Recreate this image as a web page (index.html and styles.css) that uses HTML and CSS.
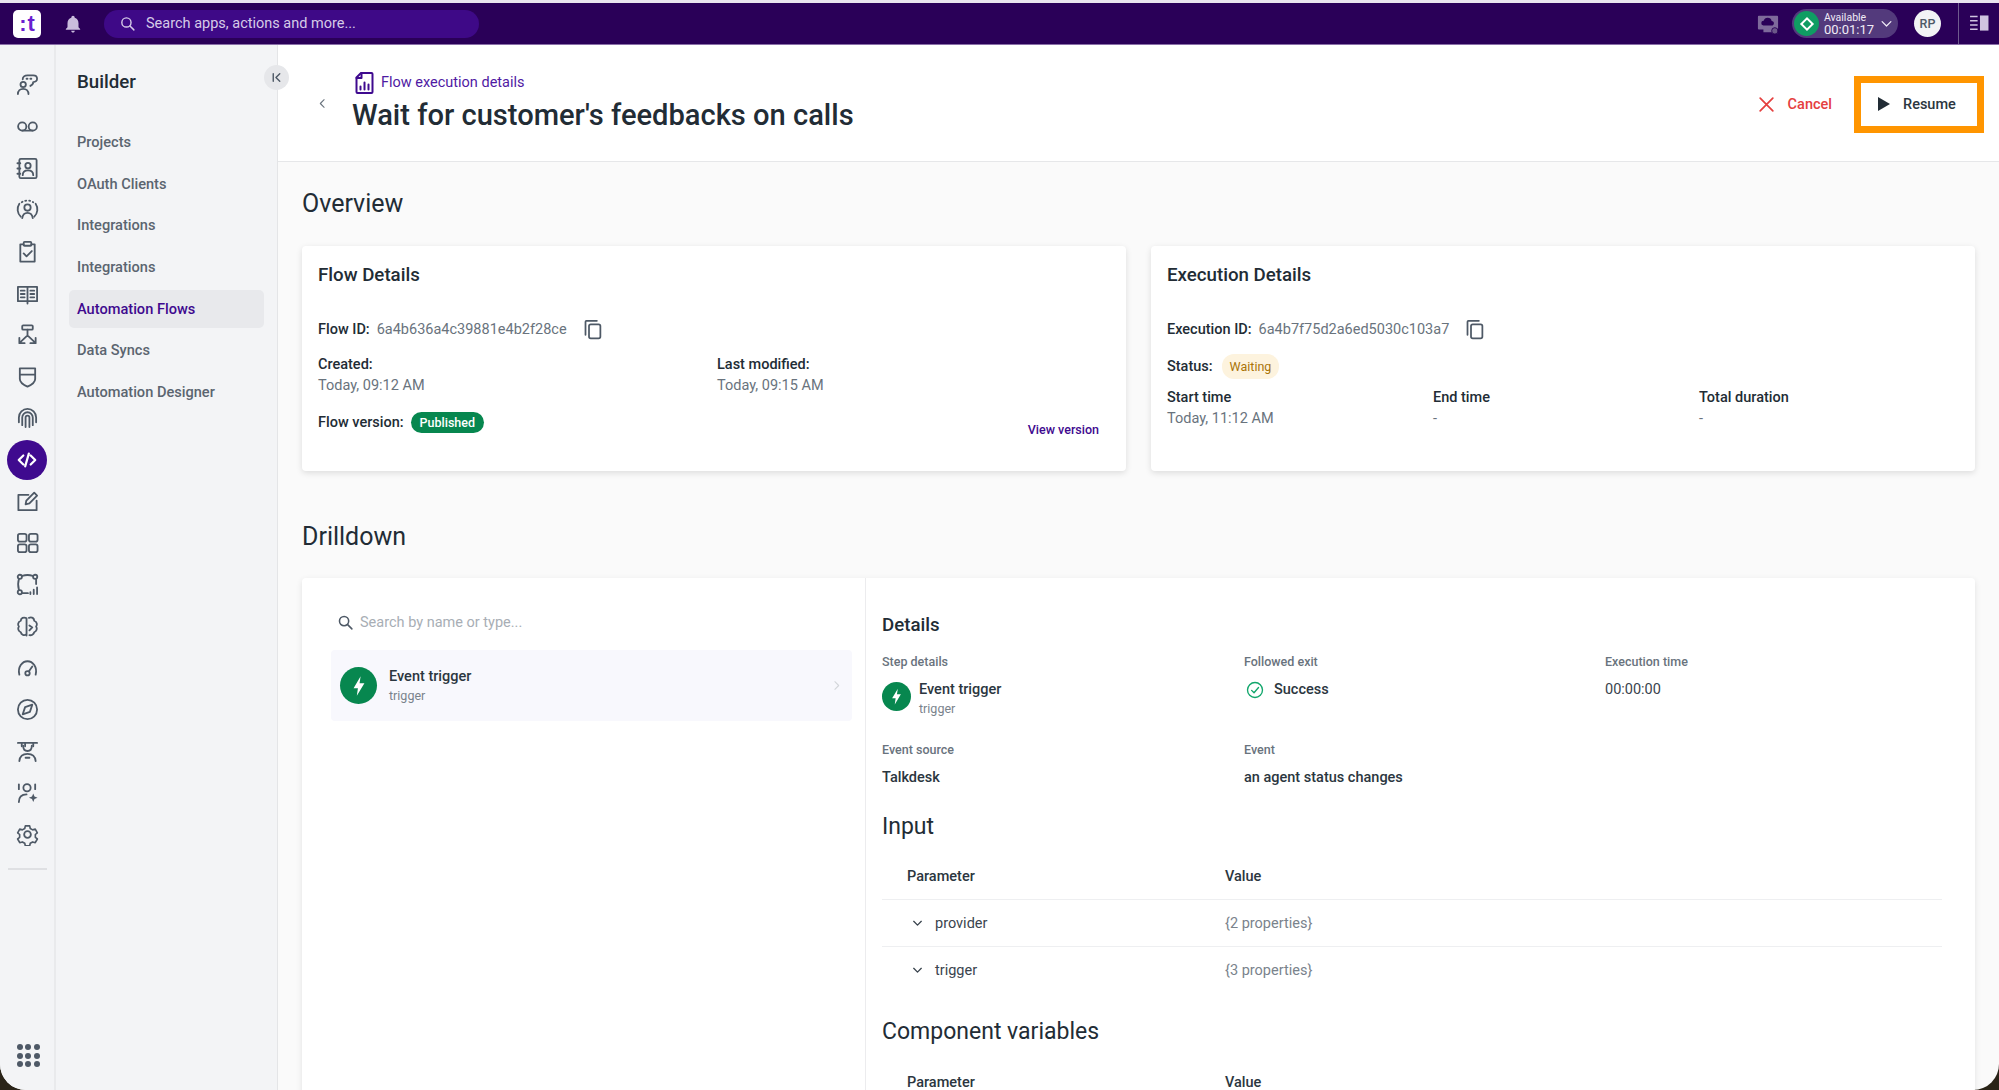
FILE: index.html
```html
<!DOCTYPE html>
<html lang="en">
<head>
<meta charset="UTF-8" />
<meta name="viewport" content="width=device-width, initial-scale=1" />
<title>Flow execution details</title>
<link rel="stylesheet" href="styles.css">
</head>
<body>
<div class="app">

  <!-- Top bar -->
  <header class="topbar">
    <div class="logo"><span class="logo-dots">:</span>t</div>
    <svg class="bell" viewBox="0 0 24 24"><path d="M12 2a2 2 0 0 1 2 2v.6c3 .9 4.6 3.4 4.6 6.6v4.6l2 2.2v1H3.400v-1l2-2.200v-4.600c0-3.200 1.600-5.700 4.600-6.600V4a2 2 0 0 1 2-2zM9.800 20.200h4.400a2.200 2.200 0 0 1-4.400 0z"/></svg>
    <div class="search-pill">
      <svg viewBox="0 0 24 24"><circle cx="10.500" cy="10.500" r="6.500"/><path d="M15.500 15.500L21 21"/></svg>
      <span>Search apps, actions and more...</span>
    </div>
    <div class="topbar-right">
      <svg class="monitor" viewBox="0 0 24 24"><path class="fill" d="M2 3h20a1 1 0 0 1 1 1v13a1 1 0 0 1-1 1h-5v3H7v-3H2a1 1 0 0 1-1-1V4a1 1 0 0 1 1-1z"/><path class="cloud" d="M7 13.500a2.500 2.500 0 0 1 .3-5 4.500 4.500 0 0 1 8.700.2 2.500 2.500 0 0 1 1 4.800z"/><circle class="dot-status" cx="19.500" cy="19.500" r="3.500"/></svg>
      <div class="status-pill">
        <div class="status-dot"><i></i></div>
        <div class="status-text"><span>Available</span><b>00:01:17</b></div>
        <svg viewBox="0 0 24 24"><path d="M5 9l7 7 7-7"/></svg>
      </div>
      <div class="avatar">RP</div>
      <div class="panel-toggle">
        <svg viewBox="0 0 20 18"><path d="M0 1.500h8M0 6h8M0 10.500h8M0 15h8" class="lines"/><rect x="10.500" y="0.500" width="9" height="16"/></svg>
      </div>
    </div>
  </header>

  <div class="body-row">

    <!-- Icon rail -->
    <nav class="rail">
      <a class="rail-item"><svg viewBox="0 0 24 24"><circle cx="7.500" cy="12" r="2.800"/><path d="M2 22c0-3.500 2.500-5.500 5.500-5.500s5.500 2 5.500 5.500"/><path d="M7 6.500C7 4 9 2.500 12 2.500h6c2.500 0 4 1.400 4 3.500s-1.500 3.500-4 3.500c0 1.500-1 3-3 4"/><path class="dotted" d="M11 6h7"/></svg></a>
      <a class="rail-item"><svg viewBox="0 0 24 24"><circle cx="6.500" cy="12" r="4.300"/><circle cx="17.500" cy="12" r="4.300"/><path d="M6.500 16.300h11"/></svg></a>
      <a class="rail-item"><svg viewBox="0 0 24 24"><rect x="3.500" y="2" width="18" height="20" rx="1.500"/><circle cx="12.500" cy="9" r="2.800"/><path d="M7 19c0-3.500 2.500-5 5.500-5s5.500 1.500 5.500 5M1.500 6.500h3M1.500 12h3M1.500 17.500h3"/></svg></a>
      <a class="rail-item"><svg viewBox="0 0 24 24"><circle cx="12" cy="10" r="3.300"/><path d="M6.500 21c.5-3.500 2.500-5.500 5.500-5.500s5 2 5.500 5.500"/><path d="M5 19.500A10.500 10.500 0 0 1 3.500 6M19 19.500A10.500 10.500 0 0 0 20.500 6"/><path class="dotted" d="M6 4.500a10.500 10.500 0 0 1 12 0"/></svg></a>
      <a class="rail-item"><svg viewBox="0 0 24 24"><path d="M8 4.500H4.500v18h15v-18H16"/><rect x="8" y="2" width="8" height="4" rx="1"/><path d="M8 14l3 3 5.500-5.500"/></svg></a>
      <a class="rail-item"><svg viewBox="0 0 24 24"><path d="M12 5H2v15h10V5zm0 0h10v15H12M12 20v2.500M5 9h4M5 12.500h4M5 16h4M15 9h4M15 12.500h4M15 16h4"/></svg></a>
      <a class="rail-item"><svg viewBox="0 0 24 24"><rect x="6.500" y="2.500" width="11" height="4.500" rx="1"/><path d="M12 7v6l-8 7.500M12 13l8 7.500M3.500 15.500v5.500H9M20.500 15.500v5.500H15"/></svg></a>
      <a class="rail-item"><svg viewBox="0 0 24 24"><path d="M4 3.500h16v11c0 3.500-3.500 6-8 8-4.500-2-8-4.500-8-8zM4 10h16"/></svg></a>
      <a class="rail-item"><svg viewBox="0 0 24 24"><path d="M3 17v-5a9 9 0 0 1 18 0v5M6.500 20v-8a5.500 5.500 0 0 1 11 0v8M10 22v-10a2 2 0 0 1 4 0v10M8 4l0 0"/></svg></a>
      <a class="rail-item"><span class="rail-active"><svg viewBox="0 0 24 24"><path d="M8 7l-5 5 5 5M16 7l5 5-5 5M14 5l-4 14"/></svg></span></a>
      <a class="rail-item"><svg viewBox="0 0 24 24"><path d="M13 5H2.500v16h19V11"/><path d="M10 15l.8-4L19 2.800l3 3L14 14z"/></svg></a>
      <a class="rail-item"><svg viewBox="0 0 24 24"><rect x="2" y="3" width="9" height="8" rx="2"/><rect x="13.500" y="3" width="9" height="8" rx="2"/><rect x="2" y="14" width="9" height="8" rx="2"/><rect x="13.500" y="14" width="9" height="8" rx="2"/></svg></a>
      <a class="rail-item"><svg viewBox="0 0 24 24"><circle cx="4" cy="4" r="2.200"/><circle cx="20" cy="4" r="2.200"/><circle cx="4" cy="20" r="2.200"/><path d="M6.500 3c3-1 8-1 11 0M3 6.500c-1 3-1 7 0 11M21 6.500v5M6.500 21h6M15 22v-2M18.500 22v-4.500M22 22v-7"/></svg></a>
      <a class="rail-item"><svg viewBox="0 0 24 24"><path d="M11 3.500c-3-2-6 0-6 2.500-3 1-3.500 4.500-2 6-1.500 2-.5 5 2 6 .5 2.500 3.500 4 6 2zM11 3.500v18"/><path d="M13.500 3c3-1.500 5.500.500 5.500 3 3 1 3.500 4.500 2 6 1.500 2 .5 5-2 6-.5 2.500-3 3.500-5 3M14 11l3 2-3 3"/></svg></a>
      <a class="rail-item"><svg viewBox="0 0 24 24"><path d="M3.500 19.500c-2-8 3-14 8.500-14s10.500 6 8.500 14"/><circle cx="12" cy="18" r="2.300"/><path d="M13.500 16l3.500-5"/></svg></a>
      <a class="rail-item"><svg viewBox="0 0 24 24"><circle cx="12" cy="12" r="10"/><path d="M17 7l-2.500 7.500L7 17l2.500-7.500z"/></svg></a>
      <a class="rail-item"><svg viewBox="0 0 24 24"><path d="M2 3h20M6 3v3.500M9.500 3v3.500M18 3v3.500"/><path d="M7.500 6c0 3.500 2 5.500 4.500 5.500S16.500 9.500 16.500 6"/><path d="M3.500 22c.5-5 4-7.500 8.500-7.500s8 2.500 8.500 7.500"/><path d="M10 18.500h4"/></svg></a>
      <a class="rail-item"><svg viewBox="0 0 24 24"><circle cx="11.500" cy="7" r="3.800"/><path d="M3 22c0-5 3-8 8-8M3 3.500v5M20 3.500v5"/><path class="sparkle" d="M18 13l1.300 3.200 3.200 1.300-3.200 1.300L18 22l-1.300-3.200-3.200-1.300 3.200-1.300z"/></svg></a>
      <a class="rail-item"><svg viewBox="0 0 24 24"><path d="M9.500 2h5l.7 3 2.800 1.600 3-.9 2.400 4.300-2.300 2 0 3.200 2.300 2-2.400 4.300-3-.9-2.800 1.600-.7 3h-5l-.7-3L6 20.600l-3 .9-2.400-4.300 2.300-2v-3.200l-2.300-2L3 5.700l3 .9 2.800-1.600z" transform="translate(1.200 1.200) scale(.9)"/><circle cx="12" cy="12" r="3.500"/></svg></a>
      <div class="rail-divider"></div>
      <div class="rail-apps">
        <i></i><i></i><i></i><i></i><i></i><i></i><i></i><i></i><i></i>
      </div>
    </nav>

    <!-- Section sidebar -->
    <aside class="sidebar">
      <h2 class="sidebar-title">Builder</h2>
      <button class="collapse-btn"><svg viewBox="0 0 24 24"><path d="M6 5v14M18 5l-7 7 7 7"/></svg></button>
      <ul class="sidebar-nav">
        <li>Projects</li>
        <li>OAuth Clients</li>
        <li>Integrations</li>
        <li>Integrations</li>
        <li class="active">Automation Flows</li>
        <li>Data Syncs</li>
        <li>Automation Designer</li>
      </ul>
    </aside>

    <main class="main">
      <div class="page-header">
        <svg class="back" viewBox="0 0 24 24"><path d="M15 5l-7 7 7 7"/></svg>
        <div class="page-heading">
          <div class="crumb">
            <svg viewBox="0 0 18 22"><path d="M5.500 1H16a1 1 0 0 1 1 1v18a1 1 0 0 1-1 1H2a1 1 0 0 1-1-1V5.500z"/><path d="M1 6h5V1M5 17.500v-3M9 17.500v-7M13 17.500v-5"/></svg>
            <span>Flow execution details</span>
          </div>
          <h1>Wait for customer's feedbacks on calls</h1>
        </div>
        <div class="page-actions">
          <button class="btn-cancel"><svg viewBox="0 0 24 24"><path d="M4 4l16 16M20 4L4 20"/></svg>Cancel</button>
          <button class="btn-resume"><svg viewBox="0 0 12 14"><path d="M0 0l12 7-12 7z"/></svg>Resume</button>
        </div>
      </div>

      <div class="content">
        <h2 class="section-title">Overview</h2>
        <div class="cards">
          <section class="card">
            <h3>Flow Details</h3>
            <div class="id-row">
              <b>Flow ID:</b><span>6a4b636a4c39881e4b2f28ce</span>
              <svg class="copy" viewBox="0 0 24 24"><path d="M4 18V3a1 1 0 0 1 1-1h12"/><rect x="8" y="6" width="13" height="16" rx="2"/></svg>
            </div>
            <div class="meta-two">
              <div><b>Created:</b><span>Today, 09:12 AM</span></div>
              <div><b>Last modified:</b><span>Today, 09:15 AM</span></div>
            </div>
            <div class="version-row">
              <b>Flow version:</b><span class="badge-green">Published</span>
              <a class="view-link">View version</a>
            </div>
          </section>
          <section class="card">
            <h3>Execution Details</h3>
            <div class="id-row">
              <b>Execution ID:</b><span>6a4b7f75d2a6ed5030c103a7</span>
              <svg class="copy" viewBox="0 0 24 24"><path d="M4 18V3a1 1 0 0 1 1-1h12"/><rect x="8" y="6" width="13" height="16" rx="2"/></svg>
            </div>
            <div class="status-row"><b>Status:</b><span class="badge-wait">Waiting</span></div>
            <div class="meta-three">
              <div><b>Start time</b><span>Today, 11:12 AM</span></div>
              <div><b>End time</b><span>-</span></div>
              <div><b>Total duration</b><span>-</span></div>
            </div>
          </section>
        </div>

        <h2 class="section-title drill-title">Drilldown</h2>
        <section class="drill">
          <div class="steps">
            <div class="step-search">
              <svg viewBox="0 0 24 24"><circle cx="10" cy="10" r="6.500"/><path d="M15 15l6 6"/></svg>
              <span>Search by name or type...</span>
            </div>
            <div class="step-item">
              <div class="bolt-circle"><svg viewBox="0 0 24 24"><path d="M13.500 3L7 14h4l-1 7 7-11.500h-4.500z"/></svg></div>
              <div class="step-text"><b>Event trigger</b><span>trigger</span></div>
              <svg class="step-arrow" viewBox="0 0 24 24"><path d="M9 5l7 7-7 7"/></svg>
            </div>
          </div>
          <div class="details">
            <h3>Details</h3>
            <div class="detail-grid">
              <div class="detail-cell">
                <label>Step details</label>
                <div class="step-mini">
                  <div class="bolt-circle small"><svg viewBox="0 0 24 24"><path d="M13.500 3L7 14h4l-1 7 7-11.500h-4.500z"/></svg></div>
                  <div class="step-text"><b>Event trigger</b><span>trigger</span></div>
                </div>
              </div>
              <div class="detail-cell">
                <label>Followed exit</label>
                <div class="exit-value">
                  <svg viewBox="0 0 24 24"><circle cx="12" cy="12" r="10"/><path d="M7.500 12.500l3.200 3.200 6-7"/></svg>
                  <b>Success</b>
                </div>
              </div>
              <div class="detail-cell">
                <label>Execution time</label>
                <div class="plain-value">00:00:00</div>
              </div>
              <div class="detail-cell">
                <label>Event source</label>
                <div class="strong-value">Talkdesk</div>
              </div>
              <div class="detail-cell">
                <label>Event</label>
                <div class="strong-value">an agent status changes</div>
              </div>
            </div>

            <h2 class="sub-title">Input</h2>
            <div class="param-table">
              <div class="param-head"><span>Parameter</span><span>Value</span></div>
              <div class="param-row">
                <span class="param-name"><svg viewBox="0 0 24 24"><path d="M5 8l7 7 7-7"/></svg>provider</span>
                <span class="param-val">{2 properties}</span>
              </div>
              <div class="param-row no-line">
                <span class="param-name"><svg viewBox="0 0 24 24"><path d="M5 8l7 7 7-7"/></svg>trigger</span>
                <span class="param-val">{3 properties}</span>
              </div>
            </div>

            <h2 class="sub-title vars-title">Component variables</h2>
            <div class="param-table">
              <div class="param-head"><span>Parameter</span><span>Value</span></div>
            </div>
          </div>
        </section>
      </div>
    </main>
  </div>
</div>
</body>
</html>
```
FILE: styles.css
```css
* {
  box-sizing: border-box;
}
html, body {
  margin: 0;
  height: 100%;
  overflow: hidden;
}
body {
  font-family: Roboto, "Liberation Sans", sans-serif;
  background: #2a2418;
  color: #1f2a33;
  font-size: 14.500px;
}
svg {
  fill: none;
  stroke: currentColor;
  stroke-width: 2;
  stroke-linecap: round;
  stroke-linejoin: round;
  flex-shrink: 0;
}
h1, h2, h3, ul {
  margin: 0;
  padding: 0;
}
button {
  font-family: inherit;
  border: none;
  background: none;
  padding: 0;
}
.app {
  height: 1090px;
  display: flex;
  flex-direction: column;
  background: #fafafa;
  border-radius: 0 0 26px 26px;
  overflow: hidden;
  border-top: 3px solid #e9e4ee;
}

/* Top bar */
.topbar {
  height: 42px;
  flex-shrink: 0;
  background: #2a0058;
  border-bottom: 1px solid #8a6fa8;
  display: flex;
  align-items: center;
  padding-left: 13px;
}
.logo {
  width: 28px;
  height: 28px;
  background: #fff;
  border-radius: 5px;
  color: #6a1fd0;
  font-family: "Liberation Sans", sans-serif;
  font-weight: 700;
  font-size: 22px;
  line-height: 27px;
  text-align: center;
}
.logo-dots {
  margin-right: 1px;
}
.bell {
  width: 20px;
  height: 20px;
  margin-left: 22px;
  fill: #c9bcdc;
  stroke: none;
}
.search-pill {
  width: 375px;
  height: 28px;
  margin-left: 21px;
  border-radius: 14px;
  background: #3e0987;
  color: #d6cbe8;
  display: flex;
  align-items: center;
  padding-left: 15px;
  font-size: 14.500px;
}
.search-pill svg {
  width: 17px;
  height: 17px;
  margin-right: 10px;
}
.topbar-right {
  margin-left: auto;
  display: flex;
  align-items: center;
  height: 100%;
}
.monitor {
  width: 22px;
  height: 22px;
  stroke: none;
}
.monitor .fill {
  fill: #7e6a9b;
}
.monitor .cloud {
  fill: #2a0058;
}
.monitor .dot-status {
  fill: #6b5788;
  stroke: #2a0058;
  stroke-width: 1;
}
.status-pill {
  width: 106px;
  height: 29px;
  margin-left: 13px;
  border-radius: 15px;
  background: #533a7c;
  display: flex;
  align-items: center;
  padding-left: 2px;
  color: #f0ebf6;
}
.status-dot {
  width: 25px;
  height: 25px;
  border-radius: 50%;
  background: #0f9d63;
  display: flex;
  align-items: center;
  justify-content: center;
}
.status-dot i {
  width: 10px;
  height: 10px;
  border: 2px solid #fff;
  transform: rotate(45deg);
}
.status-text {
  display: flex;
  flex-direction: column;
  margin-left: 5px;
  line-height: 12px;
}
.status-text span {
  font-size: 10.500px;
}
.status-text b {
  font-size: 13px;
  font-weight: 400;
}
.status-pill svg {
  width: 15px;
  height: 15px;
  margin-left: 5px;
}
.avatar {
  width: 27px;
  height: 27px;
  margin-left: 16px;
  border-radius: 50%;
  background: #f2f3f5;
  color: #4e5966;
  font-size: 12.500px;
  font-weight: 500;
  line-height: 27px;
  text-align: center;
}
.panel-toggle {
  width: 41px;
  height: 100%;
  margin-left: 17px;
  border-left: 1px solid #6f5a8e;
  display: flex;
  align-items: center;
  justify-content: center;
  color: #cfc4e0;
}
.panel-toggle svg {
  width: 19px;
  height: 17px;
  stroke-width: 1.500;
  stroke-linecap: butt;
}
.panel-toggle rect {
  fill: #cfc4e0;
  stroke: none;
}

.body-row {
  flex: 1;
  display: flex;
  min-height: 0;
}

/* Icon rail */
.rail {
  width: 56px;
  flex-shrink: 0;
  background: #f3f4f6;
  border-right: 2px solid #e9eaec;
  padding-top: 19px;
  position: relative;
  display: flex;
  flex-direction: column;
  align-items: center;
  color: #4e5966;
}
.rail-item {
  height: 41.650px;
  width: 100%;
  flex-shrink: 0;
  display: flex;
  align-items: center;
  justify-content: center;
}
.rail-item svg {
  width: 23px;
  height: 23px;
  stroke-width: 1.900;
}
.rail-item .dotted {
  stroke-dasharray: 1 3;
}
.rail-item .sparkle {
  fill: currentColor;
  stroke: none;
}
.rail-active {
  width: 40px;
  height: 40px;
  border-radius: 50%;
  background: #3f0a8f;
  color: #fff;
  display: flex;
  align-items: center;
  justify-content: center;
}
.rail-active svg {
  width: 22px;
  height: 22px;
  stroke-width: 2.400;
}
.rail-divider {
  width: 39px;
  height: 2px;
  margin: 13px 0 0 0;
  background: #dfe0e3;
}
.rail-apps {
  position: absolute;
  left: 17px;
  bottom: 23px;
  display: grid;
  grid-template-columns: repeat(3, 6px);
  gap: 2.400px;
}
.rail-apps i {
  width: 6px;
  height: 6px;
  border-radius: 50%;
  background: #4e5966;
}

/* Section sidebar */
.sidebar {
  width: 222px;
  flex-shrink: 0;
  background: #f3f4f6;
  border-right: 1px solid #e4e5e7;
  position: relative;
  z-index: 2;
  padding: 0 13px 0 13px;
}
.sidebar-title {
  font-size: 18.700px;
  font-weight: 500;
  line-height: 24px;
  padding: 25px 0 0 8px;
  color: #222c35;
}
.collapse-btn {
  position: absolute;
  top: 20px;
  right: -12px;
  width: 25px;
  height: 25px;
  border-radius: 50%;
  background: #e6e7ea;
  color: #4e5966;
  display: flex;
  align-items: center;
  justify-content: center;
}
.collapse-btn svg {
  width: 13px;
  height: 13px;
  stroke-width: 2.600;
}
.sidebar-nav {
  list-style: none;
  margin-top: 29px;
}
.sidebar-nav li {
  height: 38px;
  margin-bottom: 3.700px;
  padding-left: 8px;
  border-radius: 5px;
  line-height: 38px;
  font-size: 14.600px;
  font-weight: 500;
  color: #5b6570;
}
.sidebar-nav li.active {
  background: #e8e9ec;
  color: #3f0a8f;
}

/* Main */
.main {
  flex: 1;
  min-width: 0;
  display: flex;
  flex-direction: column;
}
.page-header {
  height: 117px;
  flex-shrink: 0;
  background: #fff;
  border-bottom: 1px solid #e6e7e9;
  display: flex;
  align-items: flex-start;
  padding-left: 38px;
  position: relative;
}
.back {
  width: 13px;
  height: 13px;
  margin-top: 52px;
  color: #69737d;
}
.page-heading {
  margin-left: 23px;
  padding-top: 27px;
}
.crumb {
  display: flex;
  align-items: center;
  color: #4f1aa3;
  font-size: 14.500px;
  line-height: 22px;
  padding-left: 3px;
}
.crumb svg {
  width: 19px;
  height: 22px;
  margin-right: 7px;
  color: #3f0a8f;
  stroke-width: 2;
}
h1 {
  font-size: 29.100px;
  font-weight: 500;
  line-height: 38px;
  margin-top: 2px;
  color: #222c35;
}
.page-actions {
  margin-left: auto;
  display: flex;
  align-items: center;
  height: 100%;
  padding: 2px 15px 0 0;
}
.btn-cancel {
  display: flex;
  align-items: center;
  color: #e5403f;
  font-size: 14.500px;
  font-weight: 500;
  margin-right: 22px;
}
.btn-cancel svg {
  width: 19px;
  height: 19px;
  margin-right: 12px;
  stroke-width: 2.200;
}
.btn-resume {
  width: 130px;
  height: 57px;
  border: 7px solid #ff9500;
  display: flex;
  align-items: center;
  padding-left: 17px;
  color: #2b3640;
  font-size: 14.500px;
  font-weight: 500;
}
.btn-resume svg {
  width: 12px;
  height: 14px;
  margin-right: 13px;
  fill: #222c35;
  stroke: none;
}

.content {
  flex: 1;
  min-height: 0;
  padding: 0 24px;
}
.section-title {
  font-size: 25px;
  font-weight: 400;
  line-height: 32px;
  padding-top: 26px;
  box-sizing: content-box;
  color: #222c35;
}
.cards {
  display: grid;
  grid-template-columns: 824px 824px;
  gap: 25px;
  margin-top: 26px;
}
.card {
  height: 225px;
  background: #fff;
  border-radius: 4px;
  box-shadow: 0 2px 6px rgba(0, 0, 0, 0.12);
  padding: 17px 16px 0;
}
.card h3 {
  font-size: 18.700px;
  font-weight: 500;
  line-height: 24px;
  color: #222c35;
}
.card b {
  font-weight: 500;
  color: #222c35;
}
.card span {
  color: #69737d;
}
.id-row {
  display: flex;
  align-items: center;
  margin-top: 30px;
  height: 24px;
}
.id-row span {
  margin-left: 7px;
}
.id-row .copy {
  width: 21px;
  height: 21px;
  margin-left: 15px;
  color: #4e5966;
  stroke-width: 2;
}
.meta-two {
  display: grid;
  grid-template-columns: 399px 1fr;
  margin-top: 13px;
}
.meta-two div, .meta-three div {
  display: flex;
  flex-direction: column;
  line-height: 21px;
}
.version-row {
  display: flex;
  align-items: center;
  margin-top: 15px;
  height: 22px;
}
.card .badge-green {
  margin-left: 7px;
  height: 21px;
  padding: 0 9px;
  border-radius: 11px;
  background: #07874f;
  color: #fff;
  font-size: 12.500px;
  font-weight: 500;
  line-height: 21px;
}
.view-link {
  margin-left: auto;
  margin-right: 11px;
  padding-top: 14px;
  color: #3f0a8f;
  font-size: 12.500px;
  font-weight: 500;
}
.status-row {
  display: flex;
  align-items: center;
  margin-top: 12px;
  height: 26px;
}
.card .badge-wait {
  margin-left: 9px;
  height: 25px;
  padding: 0 8px;
  border-radius: 12px;
  background: #fdf3de;
  color: #a97408;
  font-size: 12.500px;
  line-height: 25px;
}
.meta-three {
  display: grid;
  grid-template-columns: 266px 266px 1fr;
  margin-top: 8px;
}

.drill-title {
  padding-top: 50px;
}
.drill {
  margin-top: 25px;
  height: 530px;
  width: 1673px;
  background: #fff;
  border-radius: 4px;
  box-shadow: 0 2px 6px rgba(0, 0, 0, 0.1);
  display: flex;
}
.steps {
  width: 564px;
  flex-shrink: 0;
  border-right: 1px solid #ececee;
  padding: 27px 13px 0 29px;
}
.step-search {
  height: 34px;
  display: flex;
  align-items: center;
  padding-left: 6px;
  color: #a8aeb5;
}
.step-search svg {
  width: 17px;
  height: 17px;
  margin-right: 6px;
  color: #4e5966;
  stroke-width: 2.200;
}
.step-item {
  margin-top: 11px;
  height: 71px;
  border-radius: 4px;
  background: #f8f8fd;
  display: flex;
  align-items: center;
  padding: 0 9px;
}
.bolt-circle {
  width: 37px;
  height: 37px;
  border-radius: 50%;
  background: #07874f;
  display: flex;
  align-items: center;
  justify-content: center;
  flex-shrink: 0;
}
.bolt-circle svg {
  width: 26px;
  height: 26px;
  fill: #fff;
  stroke: none;
}
.bolt-circle.small {
  width: 29px;
  height: 29px;
  margin-top: 2px;
}
.bolt-circle.small svg {
  width: 21px;
  height: 21px;
}
.step-text {
  display: flex;
  flex-direction: column;
  margin-left: 12px;
  line-height: 19px;
}
.step-text b {
  font-weight: 500;
  color: #2b3640;
}
.step-text span {
  font-size: 12.500px;
  color: #7a838c;
}
.step-arrow {
  width: 13px;
  height: 13px;
  margin-left: auto;
  color: #d3d6da;
}
.details {
  flex: 1;
  padding: 35px 33px 0 16px;
}
.details h3 {
  font-size: 18.700px;
  font-weight: 500;
  line-height: 24px;
  color: #222c35;
}
.detail-grid {
  display: grid;
  grid-template-columns: 362px 361px 1fr;
  row-gap: 16px;
  margin-top: 17px;
}
.detail-cell label {
  display: block;
  font-size: 12.500px;
  font-weight: 500;
  line-height: 16px;
  color: #69737d;
}
.step-mini {
  display: flex;
  margin-top: 10px;
  height: 46px;
}
.step-mini .step-text {
  margin-left: 8px;
}
.exit-value {
  display: flex;
  align-items: center;
  margin-top: 10px;
  height: 19px;
  padding-left: 2px;
}
.exit-value svg {
  width: 18px;
  height: 18px;
  margin-right: 10px;
  color: #10a66b;
  stroke-width: 1.800;
}
.exit-value b, .strong-value {
  font-weight: 500;
  color: #2b3640;
}
.plain-value {
  margin-top: 10px;
  line-height: 19px;
  color: #3a444e;
}
.strong-value {
  margin-top: 10px;
  line-height: 19px;
}
.sub-title {
  font-size: 23px;
  font-weight: 400;
  line-height: 30px;
  margin-top: 25px;
  color: #222c35;
}
.vars-title {
  margin-top: 23px;
}
.param-table {
  margin-top: 19px;
}
.vars-title + .param-table {
  margin-top: 20px;
}
.param-head, .param-row {
  display: grid;
  grid-template-columns: 318px 1fr;
  align-items: center;
  border-bottom: 1px solid #eeeff1;
}
.param-head {
  height: 39px;
  padding: 0 0 7px 25px;
  font-weight: 500;
  color: #2b3640;
}
.param-row {
  height: 47px;
  padding-left: 25px;
  color: #4e5966;
}
.param-row.no-line {
  border-bottom: none;
}
.param-name {
  display: flex;
  align-items: center;
  color: #3a444e;
}
.param-name svg {
  width: 13px;
  height: 13px;
  margin: 0 11px 0 4px;
  stroke-width: 2.400;
}
.param-val {
  color: #7a838c;
}
```
